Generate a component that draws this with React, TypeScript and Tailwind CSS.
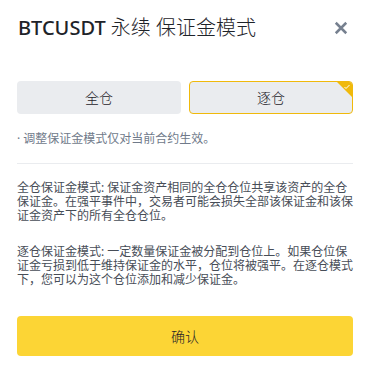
const font = "font-['Noto_Sans','Noto_Sans_CJK_SC',sans-serif]";

export default function App() {
  return (
    <div className={`w-[372px] h-[374px] bg-white px-[17px] ${font}`}>
      <div className="pt-[14px] flex items-center justify-between h-[42px]">
        <h1 className="text-[20px] leading-[28px] text-[#1e2329] pl-px">
          <span className="font-medium">BTCUSDT</span> <span className="font-light">永续 保证金模式</span>
        </h1>
        <button className="w-6 h-6 mr-[2px] flex items-center justify-center text-[#76808f]">
          <svg viewBox="0 0 24 24" className="w-[18px] h-[18px]" fill="none" stroke="currentColor" strokeWidth={3.4}>
            <path d="M5 5l14 14M19 5L5 19" />
          </svg>
        </button>
      </div>

      <div className="mt-[39px] grid grid-cols-2 gap-2 w-[336px]">
        <button className="h-[33px] rounded-[4px] bg-[#eaecef] text-[14px] font-light text-[#1e2329]">全仓</button>
        <button className="relative h-[33px] rounded-[4px] bg-[#eaecef] border border-[#f0b90b] text-[14px] font-light text-[#1e2329] overflow-hidden">
          逐仓
          <span className="absolute top-0 right-0 w-[15px] h-[15px] bg-[#f0b90b] [clip-path:polygon(0_0,100%_0,100%_100%)]">
            <svg viewBox="0 0 16 16" className="absolute top-[1px] right-[1px] w-[8px] h-[8px]" fill="none" stroke="white" strokeWidth={2}>
              <path d="M3 8l3 3 7-7" />
            </svg>
          </span>
        </button>
      </div>

      <p className="mt-[17px] text-[12px] leading-[16px] text-[#707a8a]">· 调整保证金模式仅对当前合约生效。</p>

      <div className="mt-[16px] h-px w-[336px] bg-[#eaecef]" />

      <div className="mt-[17px] text-[12px] leading-[14px] text-[#474d57]">
        <p>全仓保证金模式: 保证金资产相同的全仓仓位共享该资产的全仓保证金。在强平事件中，交易者可能会损失全部该保证金和该保证金资产下的所有全仓仓位。</p>
        <p className="mt-[22px]">逐仓保证金模式: 一定数量保证金被分配到仓位上。如果仓位保证金亏损到低于维持保证金的水平，仓位将被强平。在逐仓模式下，您可以为这个仓位添加和减少保证金。</p>
      </div>

      <button className="mt-[29px] w-[336px] h-[40px] rounded-[4px] bg-[#fcd535] text-[14px] font-light text-[#1e2329]">确认</button>
    </div>
  );
}
